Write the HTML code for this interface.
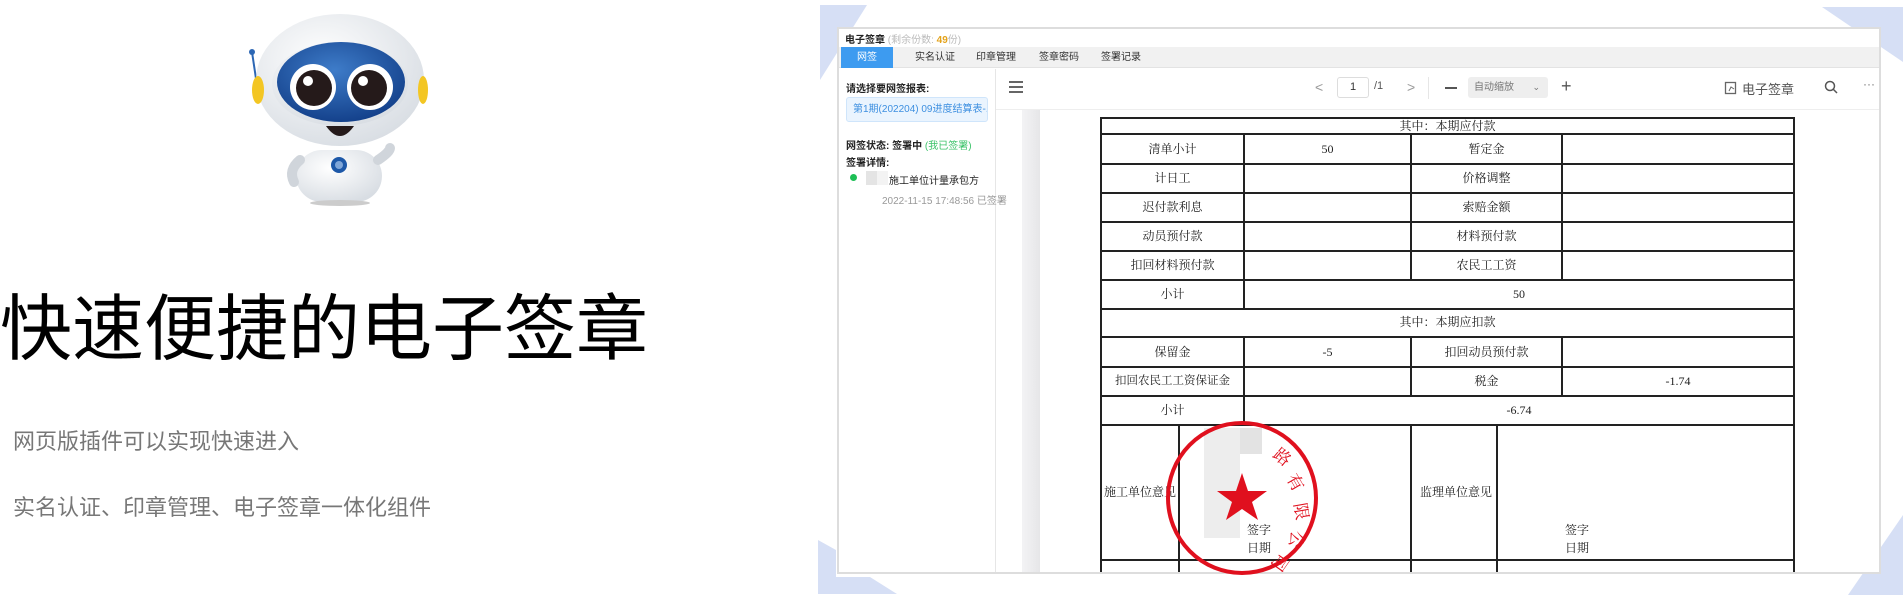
<!DOCTYPE html>
<html><head><meta charset="utf-8"><style>
*{margin:0;padding:0;box-sizing:border-box}
body{width:1903px;height:605px;background:#fff;position:relative;overflow:hidden;font-family:"Liberation Sans","Noto Sans CJK SC",sans-serif}
.a{position:absolute;white-space:nowrap}
.t{font-family:"Liberation Serif","Noto Serif CJK SC",serif;font-size:12px;color:#222;line-height:29px;height:29px;text-align:center}
.ln{position:absolute;background:#222}
</style></head><body>
<!-- robot -->
<svg class="a" style="left:240px;top:8px" width="200" height="200" viewBox="240 8 200 200">
<defs><radialGradient id="h" cx="0.4" cy="0.35" r="0.7"><stop offset="0" stop-color="#fff"/><stop offset="1" stop-color="#d8dde3"/></radialGradient>
<radialGradient id="v" cx="0.45" cy="0.35" r="0.7"><stop offset="0" stop-color="#3e7cc9"/><stop offset="1" stop-color="#113d87"/></radialGradient></defs>
<rect x="296" y="150" width="86" height="52" rx="26" fill="url(#h)"/>
<ellipse cx="340" cy="203" rx="30" ry="3" fill="#ccc"/>
<path d="M300 160 q-12 10 -6 22" stroke="#d0d5db" stroke-width="10" fill="none" stroke-linecap="round"/>
<path d="M378 160 q12 -8 12 -12" stroke="#d0d5db" stroke-width="10" fill="none" stroke-linecap="round"/>
<circle cx="339" cy="165" r="8" fill="#1d58a8"/><circle cx="339" cy="165" r="4" fill="#7fa6d8"/>
<line x1="252" y1="52" x2="258" y2="92" stroke="#2d67b4" stroke-width="2"/><circle cx="252" cy="52" r="3" fill="#2d67b4"/>
<ellipse cx="340" cy="80" rx="84" ry="66" fill="url(#h)"/>
<ellipse cx="258" cy="90" rx="6" ry="14" fill="#f3c623"/><ellipse cx="423" cy="90" rx="5" ry="14" fill="#f3c623"/>
<ellipse cx="340" cy="84" rx="68" ry="42" fill="url(#h)"/>
<ellipse cx="341" cy="82" rx="64" ry="40" fill="url(#v)"/>
<circle cx="313" cy="87" r="23" fill="#fff"/><circle cx="370" cy="87" r="23" fill="#fff"/>
<circle cx="314" cy="88" r="18" fill="#251a1a"/><circle cx="369" cy="88" r="18" fill="#251a1a"/>
<circle cx="308" cy="81" r="5" fill="#fff"/><circle cx="363" cy="81" r="5" fill="#fff"/>
<path d="M326 126 q14 20 28 0 z" fill="#251a1a"/>
</svg>
<div class="a" style="left:0;top:285px;font-size:72px;color:#000;line-height:90px">快速便捷的电子签章</div>
<div class="a" style="left:13px;top:424px;font-size:22px;color:#777">网页版插件可以实现快速进入</div>
<div class="a" style="left:13px;top:490px;font-size:22px;color:#777">实名认证、印章管理、电子签章一体化组件</div>
<svg class="a" style="left:0;top:0" width="1903" height="605">
<polygon points="820,5 867,5 820,80" fill="#d6dff5"/>
<polygon points="1822,7 1903,7 1903,62" fill="#d6dff5"/>
<polygon points="1903,515 1903,595 1848,595" fill="#d6dff5"/>
<polygon points="818,540 836,550 836,577 870,577 897,594 818,594" fill="#d6dff5"/>
</svg>
<div class="a" style="left:837px;top:27px;width:1044px;height:547px;border:2px solid #ddd;background:#fff;overflow:hidden">
 <div class="a" style="left:6px;top:2px;font-size:10px;color:#222;font-weight:bold">电子签章 <span style="color:#bbb;font-weight:normal">(剩余份数: <span style="color:#e3a21a;font-weight:bold">49</span>份)</span></div>
 <div class="a" style="left:0;top:18px;width:1040px;height:21px;background:#f1f1f1;border-bottom:1px solid #e3e3e3"></div>
 <div class="a" style="left:2px;top:18px;width:52px;height:21px;background:#3d9bf0;color:#fff;font-size:10px;line-height:21px;text-align:center">网签</div>
 <div class="a" style="left:76px;top:18px;font-size:10px;line-height:21px;color:#333">实名认证</div>
 <div class="a" style="left:137px;top:18px;font-size:10px;line-height:21px;color:#333">印章管理</div>
 <div class="a" style="left:200px;top:18px;font-size:10px;line-height:21px;color:#333">签章密码</div>
 <div class="a" style="left:262px;top:18px;font-size:10px;line-height:21px;color:#333">签署记录</div>
 <div class="a" style="left:156px;top:40px;width:1px;height:510px;background:#e6e6e6"></div>
 <div class="a" style="left:7px;top:51px;font-size:10px;font-weight:bold;color:#222">请选择要网签报表:</div>
 <div class="a" style="left:7px;top:68px;width:142px;height:25px;background:#eaf4fe;border:1px solid #cfe5fb;border-radius:3px;font-size:10px;color:#3d8fe0;line-height:23px;padding-left:6px;overflow:hidden">第1期(202204) 09进度结算表-...</div>
 <div class="a" style="left:7px;top:108px;font-size:10px;color:#222;font-weight:bold">网签状态: <span>签署中</span> <span style="color:#3cc36a;font-weight:normal">(我已签署)</span></div>
 <div class="a" style="left:7px;top:125px;font-size:10px;color:#222;font-weight:bold">签署详情:</div>
 <div class="a" style="left:11px;top:145px;width:7px;height:7px;border-radius:50%;background:#1dbf55"></div>
 <div class="a" style="left:27px;top:142px;width:22px;height:14px;background:linear-gradient(90deg,#e4e4e4 50%,#f3f3f3 50%)"></div>
 <div class="a" style="left:50px;top:143px;font-size:10px;color:#222">施工单位计量承包方</div>
 <div class="a" style="left:43px;top:163px;font-size:10px;color:#999">2022-11-15 17:48:56 已签署</div>
 <div class="a" style="left:157px;top:40px;width:885px;height:41px;border-bottom:1px solid #eee;background:#fff"></div>
 <div class="a" style="left:170px;top:52px;width:14px;height:2px;background:#666;box-shadow:0 5px 0 #666,0 10px 0 #666"></div>
 <div class="a" style="left:476px;top:50px;font-size:14px;color:#999">&lt;</div>
 <div class="a" style="left:498px;top:48px;width:32px;height:21px;border:1px solid #ddd;border-radius:3px;font-size:11px;text-align:center;line-height:19px;color:#333">1</div>
 <div class="a" style="left:535px;top:51px;font-size:11px;color:#555">/1</div>
 <div class="a" style="left:568px;top:50px;font-size:14px;color:#999">&gt;</div>
 <div class="a" style="left:589px;top:48px;width:1px;height:22px;background:#e6e6e6"></div>
 <div class="a" style="left:606px;top:58px;width:12px;height:2px;background:#555"></div>
 <div class="a" style="left:629px;top:48px;width:80px;height:21px;background:#eeeeee;border-radius:3px;font-size:10px;color:#777;line-height:21px;padding-left:6px">自动缩放<span style="position:absolute;right:8px;font-size:9px">⌄</span></div>
 <div class="a" style="left:722px;top:47px;font-size:18px;color:#555">+</div>
 <svg class="a" style="left:885px;top:52px" width="14" height="14"><rect x="1.5" y="1.5" width="10" height="11" fill="none" stroke="#666" stroke-width="1.3"/><path d="M5 10 l2 -4 l3 2" stroke="#666" fill="none"/></svg>
 <div class="a" style="left:903px;top:50px;font-size:13px;color:#555">电子签章</div>
 <svg class="a" style="left:985px;top:51px" width="14" height="14"><circle cx="6" cy="6" r="4.5" fill="none" stroke="#555" stroke-width="1.5"/><line x1="9.5" y1="9.5" x2="13" y2="13" stroke="#555" stroke-width="1.5"/></svg>
 <div class="a" style="left:1024px;top:48px;font-size:12px;color:#777">···</div>
 <div class="a" style="left:183px;top:81px;width:18px;height:470px;background:linear-gradient(90deg,#f3f3f5,#e6e6e8)"></div>
</div>
<div class="a" style="left:0;top:0">
 <div class="ln" style="left:1100px;top:117px;width:695px;height:2px"></div>
 <div class="ln" style="left:1100px;top:133px;width:695px;height:2px"></div>
 <div class="ln" style="left:1100px;top:163px;width:695px;height:2px"></div>
 <div class="ln" style="left:1100px;top:192px;width:695px;height:2px"></div>
 <div class="ln" style="left:1100px;top:221px;width:695px;height:2px"></div>
 <div class="ln" style="left:1100px;top:250px;width:695px;height:2px"></div>
 <div class="ln" style="left:1100px;top:279px;width:695px;height:2px"></div>
 <div class="ln" style="left:1100px;top:308px;width:695px;height:2px"></div>
 <div class="ln" style="left:1100px;top:336px;width:695px;height:2px"></div>
 <div class="ln" style="left:1100px;top:366px;width:695px;height:2px"></div>
 <div class="ln" style="left:1100px;top:395px;width:695px;height:2px"></div>
 <div class="ln" style="left:1100px;top:424px;width:695px;height:2px"></div>
 <div class="ln" style="left:1100px;top:559px;width:695px;height:2px"></div>
 <div class="ln" style="left:1100px;top:117px;width:2px;height:455px"></div>
 <div class="ln" style="left:1793px;top:117px;width:2px;height:455px"></div>
 <div class="ln" style="left:1243px;top:133px;width:2px;height:177px"></div>
 <div class="ln" style="left:1410px;top:133px;width:2px;height:147px"></div>
 <div class="ln" style="left:1561px;top:133px;width:2px;height:147px"></div>
 <div class="ln" style="left:1243px;top:336px;width:2px;height:90px"></div>
 <div class="ln" style="left:1410px;top:336px;width:2px;height:60px"></div>
 <div class="ln" style="left:1561px;top:336px;width:2px;height:60px"></div>
 <div class="ln" style="left:1178px;top:424px;width:2px;height:148px"></div>
 <div class="ln" style="left:1410px;top:424px;width:2px;height:148px"></div>
 <div class="ln" style="left:1496px;top:424px;width:2px;height:148px"></div>
 <div class="a t" style="left:1102px;top:118px;width:691px;line-height:16px;height:16px">其中：本期应付款</div>
 <div class="a t" style="left:1102px;top:135px;width:141px">清单小计</div><div class="a t" style="left:1245px;top:135px;width:165px">50</div><div class="a t" style="left:1412px;top:135px;width:149px">暂定金</div>
 <div class="a t" style="left:1102px;top:164px;width:141px">计日工</div><div class="a t" style="left:1412px;top:164px;width:149px">价格调整</div>
 <div class="a t" style="left:1102px;top:193px;width:141px">迟付款利息</div><div class="a t" style="left:1412px;top:193px;width:149px">索赔金额</div>
 <div class="a t" style="left:1102px;top:222px;width:141px">动员预付款</div><div class="a t" style="left:1412px;top:222px;width:149px">材料预付款</div>
 <div class="a t" style="left:1102px;top:251px;width:141px">扣回材料预付款</div><div class="a t" style="left:1412px;top:251px;width:149px">农民工工资</div>
 <div class="a t" style="left:1102px;top:280px;width:141px">小计</div><div class="a t" style="left:1245px;top:280px;width:548px">50</div>
 <div class="a t" style="left:1102px;top:309px;width:691px;height:27px;line-height:27px">其中：本期应扣款</div>
 <div class="a t" style="left:1102px;top:338px;width:141px">保留金</div><div class="a t" style="left:1245px;top:338px;width:165px">-5</div><div class="a t" style="left:1412px;top:338px;width:149px">扣回动员预付款</div>
 <div class="a t" style="left:1102px;top:367px;width:141px;font-size:11.5px">扣回农民工工资保证金</div><div class="a t" style="left:1412px;top:367px;width:149px">税金</div><div class="a t" style="left:1563px;top:367px;width:230px">-1.74</div>
 <div class="a t" style="left:1102px;top:396px;width:141px">小计</div><div class="a t" style="left:1245px;top:396px;width:548px">-6.74</div>
 <div class="a t" style="left:1104px;top:478px;text-align:left">施工单位意见</div>
 <div class="a t" style="left:1247px;top:520px;text-align:left;height:20px;line-height:20px">签字</div><div class="a t" style="left:1247px;top:538px;text-align:left;height:20px;line-height:20px">日期</div>
 <div class="a t" style="left:1420px;top:478px;text-align:left">监理单位意见</div>
 <div class="a t" style="left:1565px;top:520px;text-align:left;height:20px;line-height:20px">签字</div><div class="a t" style="left:1565px;top:538px;text-align:left;height:20px;line-height:20px">日期</div>
</div>
<svg class="a" style="left:1160px;top:418px" width="170" height="165">
 <rect x="44" y="10" width="36" height="110" fill="#e8e8e8" opacity="0.8"/>
 <rect x="80" y="10" width="22" height="26" fill="#dcdcdc" opacity="0.8"/>
 <ellipse cx="82" cy="80" rx="74" ry="75" fill="none" stroke="#e0101e" stroke-width="4"/>
 <polygon points="82,55 88,73 107,73 92,84 98,102 82,91 66,102 72,84 57,73 76,73" fill="#e0101e"/>
 <text x="112" y="38" font-size="17" fill="#e0101e" font-family="Noto Serif CJK SC,serif" transform="rotate(40 112 38)">路</text>
 <text x="126" y="60" font-size="17" fill="#e0101e" font-family="Noto Serif CJK SC,serif" transform="rotate(60 126 60)">有</text>
 <text x="134" y="86" font-size="17" fill="#e0101e" font-family="Noto Serif CJK SC,serif" transform="rotate(80 134 86)">限</text>
 <text x="132" y="112" font-size="17" fill="#e0101e" font-family="Noto Serif CJK SC,serif" transform="rotate(100 132 112)">公</text>
 <text x="120" y="134" font-size="17" fill="#e0101e" font-family="Noto Serif CJK SC,serif" transform="rotate(125 120 134)">司</text>
</svg>
</body></html>
